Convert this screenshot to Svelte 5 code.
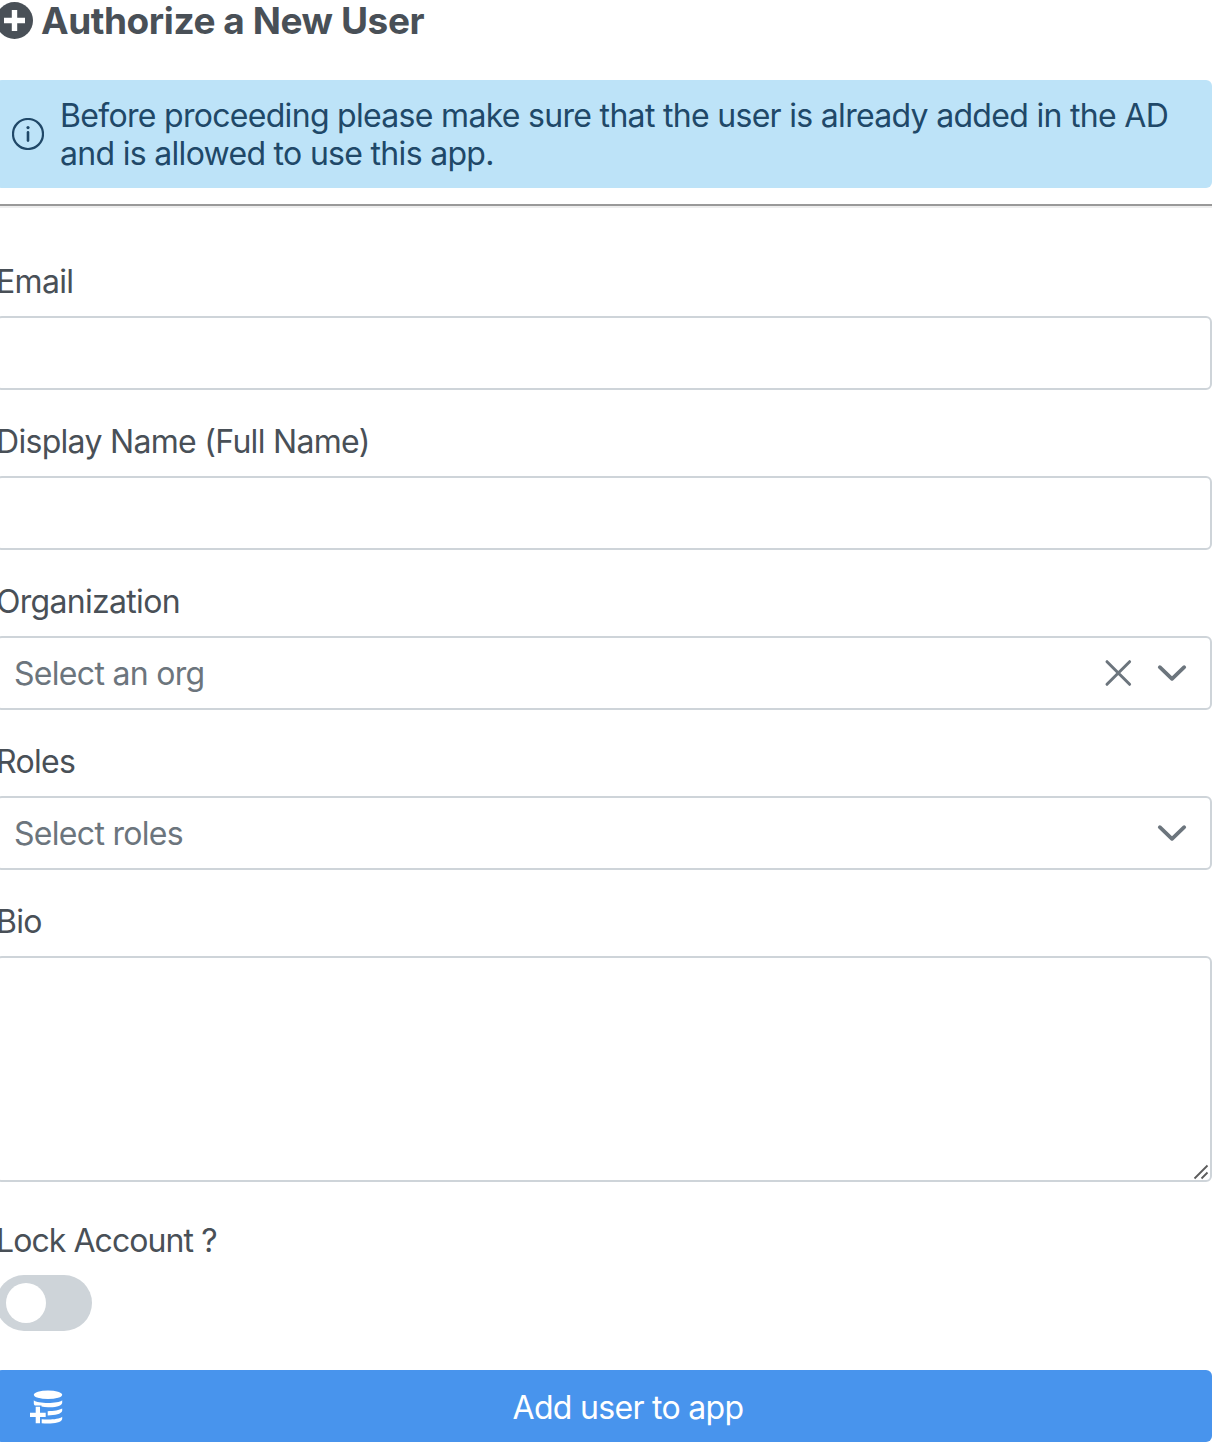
<script>
  let email = $state('');
  let displayName = $state('');
  let bio = $state('');
  let locked = $state(false);
</script>

{#snippet chevron()}
  <svg class="chevron" viewBox="0 0 32 32"><path d="M3.800 10.200 16 21.800 28.200 10.200" /></svg>
{/snippet}

<main>
  <h1>
    <svg class="plus" viewBox="0 0 37 37"><circle cx="18.500" cy="18.500" r="18.500" /><path d="M18.500 8v21M8 18.500h21" /></svg>
    <span>Authorize a New User</span>
  </h1>

  <div class="notice">
    <svg class="info" viewBox="0 0 32 32"><circle cx="16" cy="16" r="15" /><path d="M16 14.400v8.200" /><circle class="dot" cx="16" cy="9.600" r="1.600" /></svg>
    <p>Before proceeding please make sure that the user is already added in the AD<br />and is allowed to use this app.</p>
  </div>
  <hr />

  <form>
    <label for="email">Email</label>
    <input id="email" class="box" bind:value={email} />

    <label for="name">Display Name (Full Name)</label>
    <input id="name" class="box" bind:value={displayName} />

    <label for="org">Organization</label>
    <div id="org" class="box select">
      <span>Select an org</span>
      <svg class="clear" viewBox="0 0 28 28"><path d="M3 2.700 25.600 25.300M25.600 2.700 3 25.300" /></svg>
      {@render chevron()}
    </div>

    <label for="roles">Roles</label>
    <div id="roles" class="box select">
      <span>Select roles</span>
      {@render chevron()}
    </div>

    <label for="bio">Bio</label>
    <div class="area">
      <textarea id="bio" class="box" bind:value={bio}></textarea>
      <svg class="grip" viewBox="0 0 16 16"><path d="M1.500 14.500 14.500 1.500M8.500 14.500l6-6" /></svg>
    </div>

    <label class="lock" for="lock">Lock Account ?</label>
    <button id="lock" type="button" class="switch" class:on={locked} aria-label="Lock account" onclick={() => (locked = !locked)}><i></i></button>

    <button type="button" class="submit">
      <svg class="db" viewBox="0 0 36 36">
        <ellipse cx="20" cy="4.700" rx="14.200" ry="4.300" />
        <path d="M5.800 10.300c4 3.600 24.400 3.600 28.400 0v2.600c-1 3.600-8 4.300-14.200 4.300-2.500 0-4.500-.2-6.500-.6v-1.100H6.900c-.8-.8-1.100-1.600-1.100-2.600z" />
        <path d="M19.700 21.200c6-.1 12-.9 14.500-2.600v2.200c-.8 3.300-7 4.500-14.500 4.600zM13.700 29.200c8 .6 17.500.2 20.500-2.500V29c-1 4.500-12 5-20.500 4.300z" />
        <path d="M7.700 16.700H12v6h5.700V27H12v6.300H7.700V27H2v-4.300h5.700z" />
      </svg>
      <span>Add user to app</span>
    </button>
  </form>
</main>

<style>
  :global(body) { margin: 0; background: #fff; }
  main { width: 1216px; height: 1442px; margin-left: -4px; box-sizing: border-box; overflow: hidden; font-family: Inter, sans-serif; font-size: 32px; line-height: 38px; letter-spacing: -.695px; font-weight: 430; color: #495057; }
  h1 { display: flex; align-items: center; gap: 8px; height: 40px; margin: 0 0 40px; font-size: 37px; line-height: 40px; letter-spacing: -.43px; font-weight: 700; }
  h1 span { padding-top: 2px; }
  svg { display: block; flex: none; fill: none; stroke: currentColor; }
  .plus { width: 37px; height: 37px; }
  .plus circle { fill: currentColor; stroke: none; }
  .plus path { stroke: #fff; stroke-width: 5.400; }
  .notice { display: flex; align-items: center; gap: 16px; height: 108px; padding-left: 16px; box-sizing: border-box; background: #bde3f8; color: #204868; border-radius: 6px; }
  .notice p { margin: 2px 0 0; white-space: nowrap; }
  .info { width: 32px; height: 32px; stroke-width: 2.200; stroke-linecap: round; }
  .info path { stroke-width: 2.600; }
  .info .dot { fill: currentColor; stroke: none; }
  hr { height: 2px; margin: 16px 0 52px; border: 0; border-top: 2px solid #999; background: #eee; }
  form { display: flex; flex-direction: column; width: 1216px; }
  label { height: 44px; line-height: 44px; margin-bottom: 12px; white-space: nowrap; }
  .box { width: 100%; height: 74px; margin: 0 0 30px; box-sizing: border-box; border: 2px solid #ced4d9; border-radius: 6px; background: #fff; font: inherit; outline: 0; }
  .select { display: flex; align-items: center; padding: 0 22px 0 16px; color: #6c757d; }
  .select span { flex: 1; padding-top: 2px; }
  .clear { width: 28px; height: 28px; margin-right: 24px; stroke-width: 3; stroke-linecap: round; }
  .chevron { width: 32px; height: 32px; stroke-width: 3.800; stroke-linecap: round; stroke-linejoin: round; }
  .area { position: relative; margin-bottom: 36px; }
  textarea.box { display: block; height: 226px; margin: 0; resize: none; }
  .grip { position: absolute; right: 3px; bottom: 2px; width: 16px; height: 16px; color: #5c5c5c; stroke-width: 1.800; pointer-events: none; }
  .lock { height: 46px; line-height: 46px; margin-bottom: 11px; letter-spacing: -.93px; }
  .switch { width: 96px; height: 56px; padding: 8px 10px; margin-bottom: 39px; border: 0; border-radius: 28px; background: #ced4d9; }
  .switch i { display: block; width: 40px; height: 40px; border-radius: 50%; background: #fff; }
  .switch.on i { margin-left: 36px; }
  .submit { display: flex; align-items: center; height: 72px; padding: 4px 20px 0 32px; border: 0; border-radius: 6px; background: #4894ed; color: #fff; font: inherit; letter-spacing: inherit; }
  .submit span { flex: 1; margin-top: -1px; }
  .db { width: 36px; height: 36px; fill: currentColor; stroke: none; }
</style>
